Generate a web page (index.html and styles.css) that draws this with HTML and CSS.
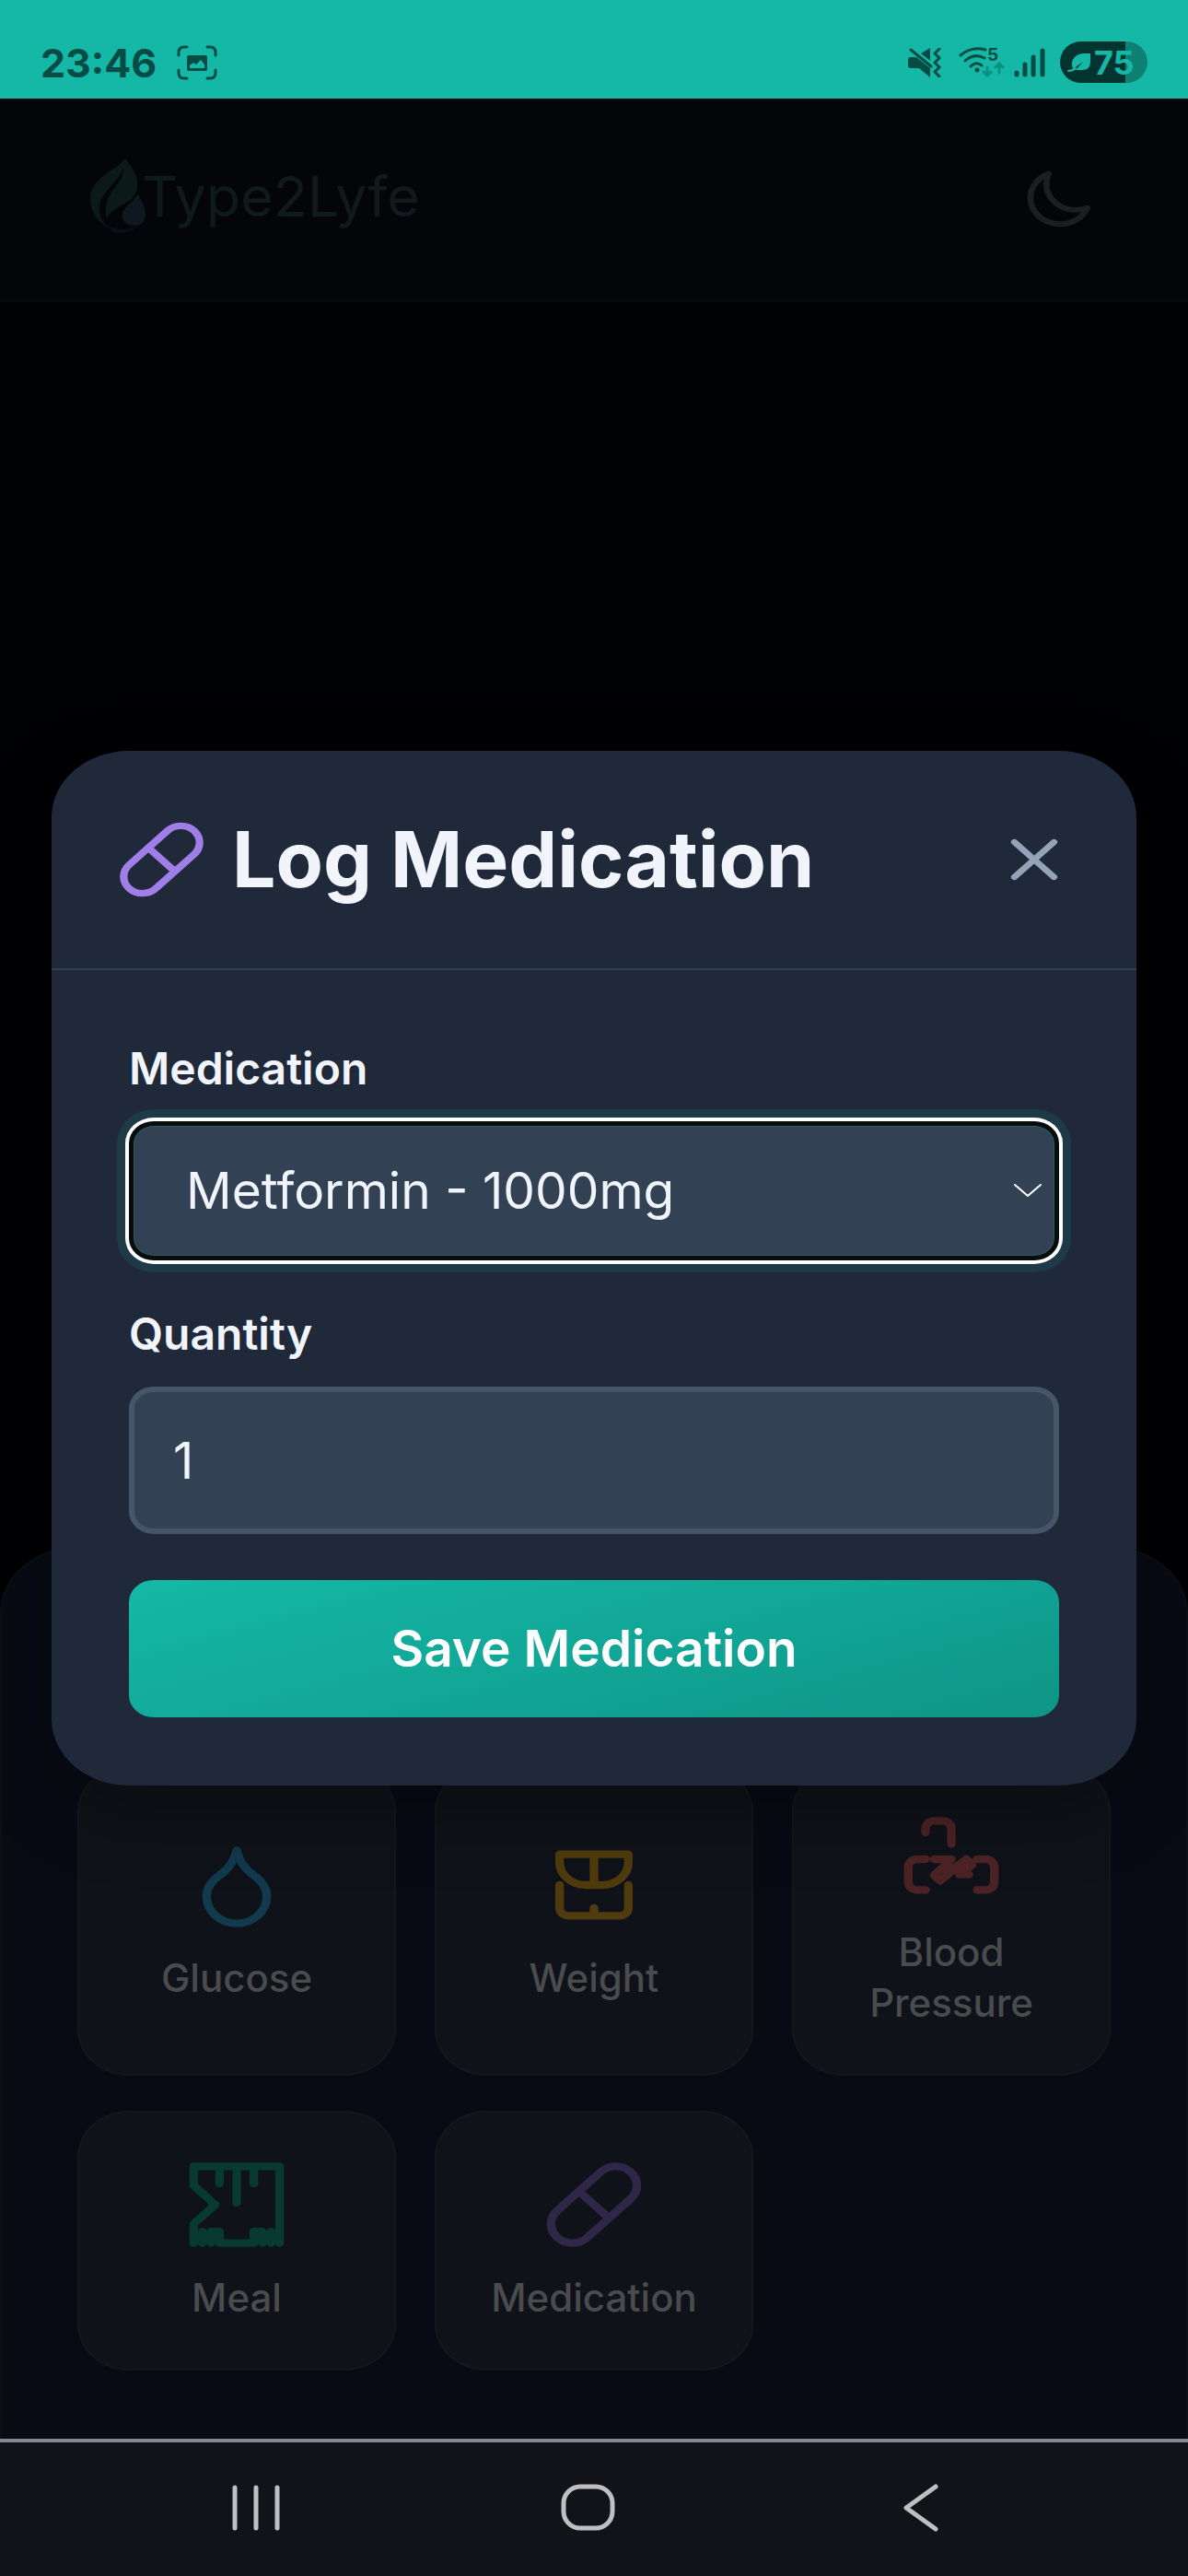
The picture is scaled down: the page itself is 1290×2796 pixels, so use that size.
FILE: index.html
```html
<!DOCTYPE html>
<html lang="en">
<head>
<meta charset="utf-8">
<meta name="viewport" content="width=device-width, initial-scale=1">
<title>Type2Lyfe</title>
<link rel="stylesheet" href="styles.css">
</head>
<body>
<div class="status-bar">
  <div class="status-group status-left">
    <span class="clock">23:46</span>
    <svg class="capture-icon" viewBox="0 0 44 38" fill="none" stroke="currentColor" stroke-width="3" stroke-linecap="round">
      <path d="M2 11V8q0-6 6-6h3M33 2h3q6 0 6 6v3M2 27v3q0 6 6 6h3M33 36h3q6 0 6-6v-3"/>
      <rect x="11" y="11" width="22" height="17" rx="2" fill="currentColor" stroke="none"/>
      <path d="M14 25v-3l4-3 3 2 5-5 4 5v4z" fill="#15b8a7" stroke="none"/>
    </svg>
  </div>
  <div class="status-group status-right">
    <svg class="mute-icon" viewBox="0 0 36 32" fill="currentColor">
      <path d="M24 0v14L14 6zM3 10h6l15 12v10L12 22H3q-3 0-3-3v-6q0-3 3-3z"/>
      <path d="M3 2l22 18M34 1l-5 5 5 5-5 5 5 5-5 5 5 5" fill="none" stroke="currentColor" stroke-width="3" stroke-linecap="round" stroke-linejoin="round"/>
    </svg>
    <svg class="wifi-icon" viewBox="0 -6 50 46" fill="none" stroke="currentColor" stroke-width="3" stroke-linecap="round">
      <path d="M2 9Q14-1 29 3M7 15q10-9 21-3M13 21q6-6 12-1"/>
      <circle cx="20" cy="25" r="2.500" fill="currentColor" stroke="none"/>
      <text x="31" y="15" font-family="Inter, sans-serif" font-weight="700" font-size="19" fill="currentColor" stroke="none">5</text>
      <path d="M31 22v9m-4-4l4 4 4-4M44 28v-10m-4 4l4-4 4 4" stroke="#0b8f81"/>
    </svg>
    <svg class="signal-icon" viewBox="0 0 34 32" stroke="currentColor" stroke-width="5" stroke-linecap="round">
      <path d="M3 27v2M12 18v11M21 10v19M31 3v26"/>
    </svg>
    <span class="battery">
      <svg class="leaf-icon" viewBox="0 0 26 22" fill="#15b8a7">
        <path d="M25 1v9q0 9-9 9H9l8-9-11 8q-3-8 2-13 4-4 11-4z"/>
        <path d="M1 20q5 0 8-3" fill="none" stroke="#15b8a7" stroke-width="2" stroke-linecap="round"/>
      </svg>75</span>
  </div>
</div>

<main class="screen">
  <header class="app-header">
    <div class="brand">
      <svg class="brand-mark" viewBox="0 0 60 81">
        <path d="M38 0C49 14 56 26 48 40 42 50 24 52 18 65 14 50 20 40 28 30 34 22 37 16 36 10 32 26 12 34 10 52 9 62 14 70 20 75 6 68 0 56 0 44 0 20 28 14 38 0Z" fill="#0c1a17"/>
        <path d="M52 39c4 8 8 14 8 21 0 9-5 13-13 13s-12-5-12-11c0-9 10-14 17-23z" fill="#10181f"/>
        <path d="M18 72q16 10 36 0-10 9-21 9t-15-9z" fill="#08101c"/>
      </svg>
      <span class="brand-name">Type2Lyfe</span>
    </div>
    <button class="icon-button theme-toggle" type="button" aria-label="Dark mode">
      <svg class="moon-icon" viewBox="0 0 24 24" preserveAspectRatio="none" fill="none" stroke="currentColor" stroke-width="2" stroke-linejoin="round">
        <path d="M21.752 15.002A9.72 9.72 0 0 1 18 15.750c-5.385 0-9.750-4.365-9.750-9.750 0-1.330.266-2.597.748-3.752A9.753 9.753 0 0 0 3 11.250C3 16.635 7.365 21 12.750 21a9.753 9.753 0 0 0 9.002-5.998Z"/>
      </svg>
    </button>
  </header>

  <section class="sheet">
    <div class="log-grid">
      <button class="log-card" type="button">
        <svg class="log-icon glucose" viewBox="0 0 24 24" preserveAspectRatio="none"><path d="M12 22a7 7 0 0 0 7-7c0-2-1-3.900-3-5.500s-3.500-4-4-6.500c-.5 2.500-2 4.900-4 6.500C6 11.100 5 13 5 15a7 7 0 0 0 7 7z"/></svg>
        <span>Glucose</span>
      </button>
      <button class="log-card" type="button">
        <svg class="log-icon weight" viewBox="0 0 24 24" preserveAspectRatio="none"><path d="M4 4h16v2a6 6 0 0 1-6 6h-4a6 6 0 0 1-6-6zM12 4v8M4 12v6a2 2 0 0 0 2 2h12a2 2 0 0 0 2-2v-6M12 18v2"/></svg>
        <span>Weight</span>
      </button>
      <button class="log-card" type="button">
        <svg class="log-icon pressure" viewBox="0 0 24 24" preserveAspectRatio="none"><path d="M6 5V4a2 2 0 0 1 2-2h2a2 2 0 0 1 2 2v4M6 12H4a2 2 0 0 0-2 2v4a2 2 0 0 0 2 2h2M18 12h2a2 2 0 0 1 2 2v4a2 2 0 0 1-2 2h-2M8 12h4l-4 4.200 1.400 1.400 6.100-5.600 1.400 1.400-3 2.600h2.200M11 15.500l4-3"/></svg>
        <span>Blood Pressure</span>
      </button>
      <button class="log-card" type="button">
        <svg class="log-icon meal" viewBox="0 0 24 24" preserveAspectRatio="none"><path d="M2 22v-5l5-5-5-5V2h20v20M8 2v4.500M12 2v9.500M16 2v4.500M2 19v3M4 19v3M6 19v3M6 19h2v3h8v-3h2M18 19v3M20 19v3M3 20.500h5M16 20.500h5"/></svg>
        <span>Meal</span>
      </button>
      <button class="log-card" type="button">
        <svg class="log-icon medication" viewBox="0 0 24 24" preserveAspectRatio="none"><path d="m10.500 20.500 10-10a4.950 4.950 0 1 0-7-7l-10 10a4.950 4.950 0 1 0 7 7ZM8.500 8.500l7 7"/></svg>
        <span>Medication</span>
      </button>
    </div>
  </section>

  <div class="overlay">
    <div class="modal" role="dialog" aria-modal="true" aria-labelledby="modal-title">
      <div class="modal-header">
        <svg class="pill-icon" viewBox="0 0 24 24" preserveAspectRatio="none"><path d="m10.500 20.500 10-10a4.950 4.950 0 1 0-7-7l-10 10a4.950 4.950 0 1 0 7 7ZM8.500 8.500l7 7"/></svg>
        <h1 class="modal-title" id="modal-title">Log Medication</h1>
        <button class="icon-button close" type="button" aria-label="Close">
          <svg class="close-icon" viewBox="0 0 24 24" preserveAspectRatio="none"><path d="M18 6 6 18M6 6l12 12"/></svg>
        </button>
      </div>
      <form class="modal-body">
        <div class="field">
          <label for="medication">Medication</label>
          <div class="select-wrap">
            <select class="control select" id="medication">
              <option>Metformin - 1000mg</option>
            </select>
            <svg class="chevron" viewBox="0 0 32 16"><path d="M2 2l14 12L30 2"/></svg>
          </div>
        </div>
        <div class="field">
          <label for="quantity">Quantity</label>
          <input class="control input" id="quantity" type="number" value="1">
        </div>
        <button class="save" type="button">Save Medication</button>
      </form>
    </div>
  </div>
</main>

<nav class="system-nav">
  <button class="icon-button" type="button" aria-label="Recent apps">
    <svg class="nav-icon" viewBox="0 0 60 52"><path d="M7 4v44M30 4v44M53 4v44"/></svg>
  </button>
  <button class="icon-button" type="button" aria-label="Home">
    <svg class="nav-icon" viewBox="0 0 60 52"><rect x="3" y="3" width="53" height="45" rx="18"/></svg>
  </button>
  <button class="icon-button" type="button" aria-label="Back">
    <svg class="nav-icon" viewBox="0 0 60 52"><path d="M46 3L14 26l32 23"/></svg>
  </button>
</nav>
</body>
</html>
```
FILE: styles.css
```css
* { box-sizing: border-box; }

body {
  margin: 0;
  min-height: 100vh;
  display: flex;
  flex-direction: column;
  background: #000104;
  font-family: Inter, "Liberation Sans", sans-serif;
}

button, input, select { font-family: inherit; margin: 0; }
svg { display: block; flex: none; }

.icon-button {
  display: flex;
  padding: 0;
  border: 0;
  background: none;
  color: inherit;
}

/* Status bar */
.status-bar {
  display: flex;
  justify-content: space-between;
  align-items: center;
  height: 107px;
  padding: 28px 44px 0;
  background: #15b8a7;
  color: #064c44;
}
.status-group { display: flex; align-items: center; }
.status-left { gap: 22px; }
.clock { font-size: 43px; line-height: 48px; font-weight: 700; }
.capture-icon { width: 44px; height: 38px; }
.mute-icon { width: 36px; height: 32px; margin-right: 19px; }
.wifi-icon { width: 50px; height: 46px; margin-right: 10px; }
.signal-icon { width: 34px; height: 32px; margin-right: 16px; }
.battery {
  display: flex;
  align-items: center;
  gap: 3px;
  width: 95px;
  height: 45px;
  padding-left: 8px;
  border-radius: 23px;
  background: linear-gradient(90deg, #04342f 75%, #0f8174 75%);
  color: #15b8a7;
  font-size: 36px;
  font-weight: 700;
}
.leaf-icon { width: 26px; height: 22px; }

/* App screen */
.screen {
  position: relative;
  flex: 1;
  display: flex;
  flex-direction: column;
}
.app-header {
  display: flex;
  justify-content: space-between;
  align-items: center;
  height: 221px;
  padding: 0 102px 0 98px;
  background: #030508;
  border-bottom: 2px solid #07090c;
}
.brand { display: flex; align-items: center; padding-bottom: 8px; }
.brand-mark { width: 60px; height: 81px; }
.brand-name {
  font-size: 61px;
  line-height: 72px;
  margin-left: -4px;
  background: linear-gradient(90deg, #0d1b18, #12191c);
  background-clip: text;
  -webkit-background-clip: text;
  color: transparent;
}
.theme-toggle { color: #1d1e20; }
.moon-icon { width: 79px; height: 70px; }

.sheet {
  margin-top: auto;
  padding: 235px 82px 74px;
  border: 2px solid #0d1015;
  border-bottom: 0;
  border-radius: 84px 84px 0 0 / 72px 72px 0 0;
  background: #080b14;
}
.log-grid {
  display: grid;
  grid-template-columns: repeat(3, 1fr);
  gap: 38px 42px;
}
.log-card {
  display: flex;
  flex-direction: column;
  align-items: center;
  justify-content: center;
  gap: 23px;
  padding: 50px;
  border: 2px solid #14171c;
  border-radius: 56px / 50px;
  background: #0f1218;
  color: #4a4b4d;
  font-size: 42px;
  line-height: 55px;
  font-weight: 500;
}
.log-icon {
  width: 112px;
  height: 100px;
  fill: none;
  stroke: currentColor;
  stroke-width: 2;
  stroke-linecap: round;
  stroke-linejoin: round;
}
.glucose { color: #113a4d; }
.weight { color: #4f3b0d; }
.pressure { color: #4c2324; }
.meal { color: #083a31; }
.medication { color: #302648; }

/* Dialog */
.overlay {
  position: absolute;
  inset: 0;
  display: flex;
  align-items: center;
  justify-content: center;
  padding: 0 56px 2px;
}
.modal {
  width: 100%;
  border-radius: 84px / 72px;
  background: #1f293a;
  box-shadow: 0 30px 80px rgba(0, 0, 0, 0.3);
  color: #f1f5fb;
}
.modal-header {
  display: flex;
  align-items: center;
  gap: 27px;
  padding: 74px 68px 74px 70px;
  border-bottom: 2px solid #314052;
}
.pill-icon {
  width: 99px;
  height: 88px;
  fill: none;
  stroke: #a07ee8;
  stroke-width: 2;
}
.modal-title {
  flex: 1;
  margin: 0;
  font-size: 84px;
  line-height: 88px;
  font-weight: 700;
  white-space: nowrap;
}
.close { color: #94a3b8; }
.close-icon {
  width: 86px;
  height: 76px;
  fill: none;
  stroke: currentColor;
  stroke-width: 2;
  stroke-linecap: round;
}
.modal-body {
  display: flex;
  flex-direction: column;
  gap: 50px;
  padding: 77px 84px 74px;
}
.field {
  display: flex;
  flex-direction: column;
  gap: 27px;
}
.field label {
  font-size: 48px;
  line-height: 60px;
  font-weight: 600;
}
.select-wrap { position: relative; }
.control {
  display: block;
  width: 100%;
  border-radius: 27px / 24px;
  background: #334155;
  color: #f1f5fb;
  font-size: 55px;
  line-height: 64px;
  appearance: none;
  outline: 0;
}
.select {
  height: 151px;
  padding: 0 57px;
  border: 5px solid #070c0c;
  box-shadow: inset 0 0 0 1px #2e5d60, 0 0 0 4px #fff, 0 0 0 13px #1e3a47;
}
.chevron {
  position: absolute;
  right: 18px;
  top: calc(50% - 8px);
  width: 32px;
  height: 16px;
  fill: none;
  stroke: #fff;
  stroke-width: 2;
  stroke-linecap: round;
  stroke-linejoin: round;
  pointer-events: none;
}
.input {
  height: 160px;
  padding: 0 42px;
  border: 6px solid #475569;
  appearance: textfield;
}
.save {
  height: 149px;
  border: 0;
  border-radius: 27px / 24px;
  background: linear-gradient(165deg, #15b8a6, #0e9587);
  color: #fff;
  font-size: 55px;
  line-height: 64px;
  font-weight: 600;
}

/* System navigation */
.system-nav {
  display: grid;
  grid-template-columns: repeat(3, 1fr);
  align-items: center;
  height: 149px;
  padding: 0 110px 4px 98px;
  border-top: 4px solid #898392;
  background: #121318;
}
.system-nav .icon-button { justify-content: center; }
.nav-icon {
  width: 60px;
  height: 52px;
  fill: none;
  stroke: #bfbfc1;
  stroke-width: 5;
  stroke-linecap: round;
  stroke-linejoin: round;
}
```
